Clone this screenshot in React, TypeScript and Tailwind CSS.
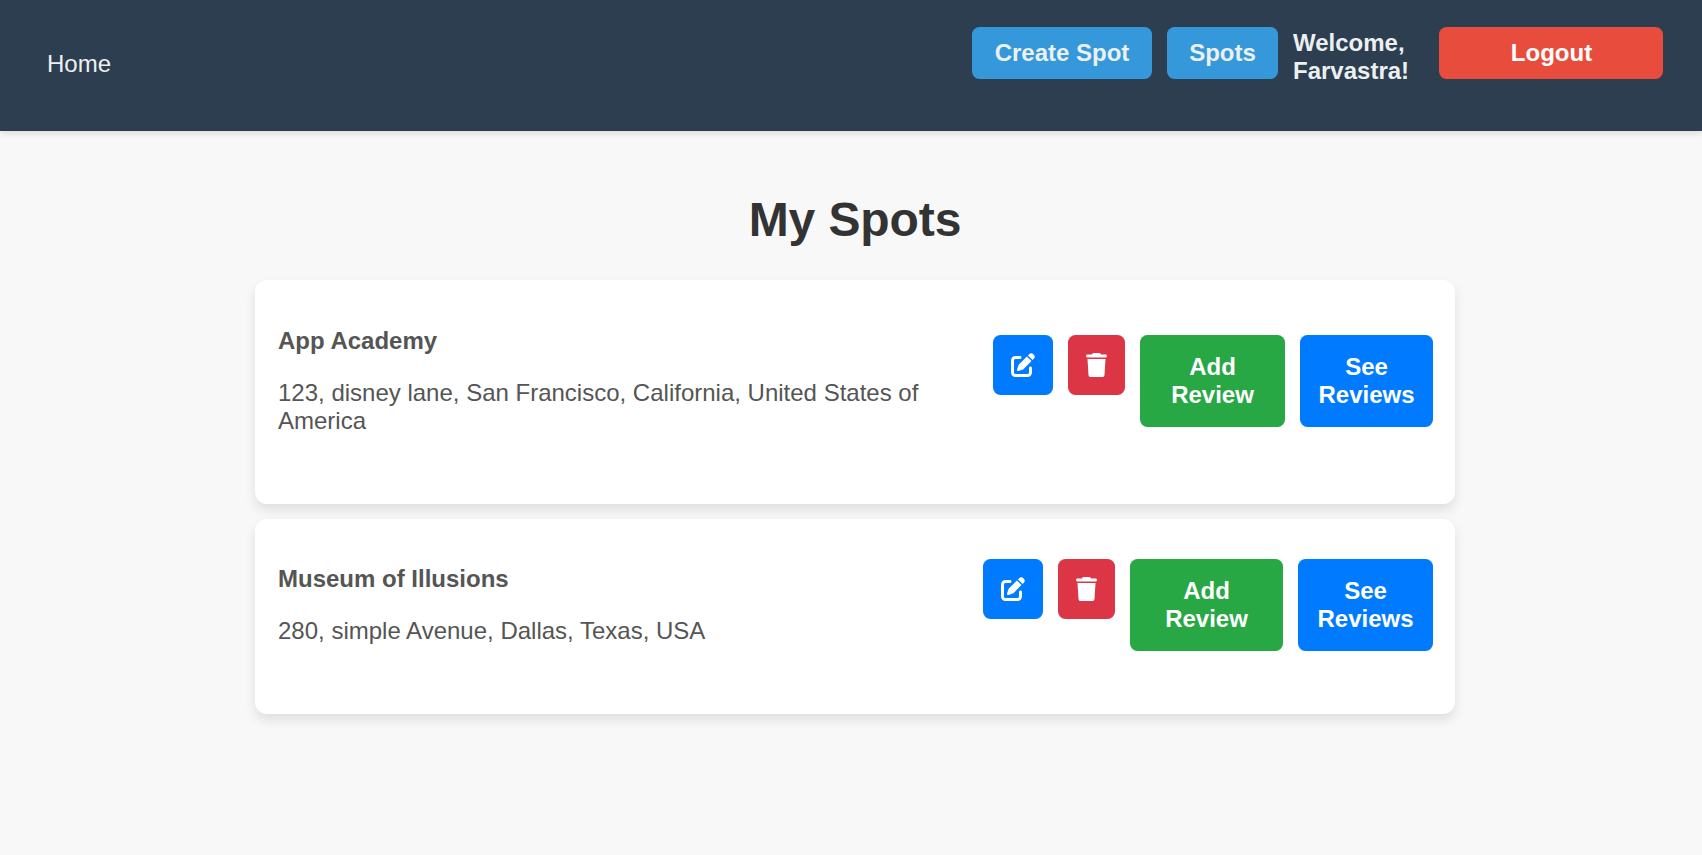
import { FaPenToSquare, FaTrash } from "react-icons/fa6";

type Spot = {
  name: string;
  address: string;
  card: string;
  info: string;
  actions: string;
  addWidth: string;
  seeWidth: string;
};

const spots: Spot[] = [
  {
    name: "App Academy",
    address: "123, disney lane, San Francisco, California, United States of America",
    card: "h-[224px]",
    info: "mt-[47px]",
    actions: "mt-[55px]",
    addWidth: "w-[145px]",
    seeWidth: "w-[133px]",
  },
  {
    name: "Museum of Illusions",
    address: "280, simple Avenue, Dallas, Texas, USA",
    card: "h-[195px]",
    info: "mt-[46px]",
    actions: "mt-10",
    addWidth: "w-[153px]",
    seeWidth: "w-[135px]",
  },
];

function Header() {
  return (
    <header className="flex h-[131px] items-start bg-[#2c3e50] pr-[39px] pl-[47px] text-[#ecf0f1] shadow-[0_3px_6px_rgba(0,0,0,0.1)]">
      <a className="mt-[50px]">Home</a>
      <nav className="mt-[27px] ml-auto flex items-start">
        <button className="h-[52px] w-[180px] rounded-[7.5px] bg-[#3498db] font-bold">Create Spot</button>
        <button className="ml-[15px] h-[52px] w-[111px] rounded-[7.5px] bg-[#3498db] font-bold">Spots</button>
        <span className="mt-[2px] ml-[15px] w-[146px] font-bold">
          Welcome,
          <br />
          Farvastra!
        </span>
        <button className="h-[52px] w-[224px] rounded-[7.5px] bg-[#e74c3c] pl-px font-bold text-white">Logout</button>
      </nav>
    </header>
  );
}

function SpotCard({ spot }: { spot: Spot }) {
  return (
    <li
      className={`flex items-start justify-between rounded-xl bg-white pr-[22px] pl-[23px] text-[#555] shadow-[0_6px_12px_rgba(0,0,0,0.1)] ${spot.card}`}
    >
      <div className={`w-[670px] ${spot.info}`}>
        <h2 className="mb-6 font-bold">{spot.name}</h2>
        <p>{spot.address}</p>
      </div>
      <div className={`flex items-start gap-[15px] font-bold text-white ${spot.actions}`}>
        <button aria-label="Edit" className="rounded-[7.5px] bg-[#007bff] p-[18px]">
          <FaPenToSquare className="block size-6" />
        </button>
        <button aria-label="Delete" className="rounded-[7.5px] bg-[#dc3545] p-[18px]">
          <FaTrash className="block h-6 w-[21px]" />
        </button>
        <button className={`rounded-[7.5px] bg-[#28a745] py-[18px] ${spot.addWidth}`}>
          Add
          <br />
          Review
        </button>
        <button className={`rounded-[7.5px] bg-[#007bff] py-[18px] ${spot.seeWidth}`}>
          See
          <br />
          Reviews
        </button>
      </div>
    </li>
  );
}

export default function App() {
  return (
    <div className="min-h-screen bg-[#f8f8f8] font-['Liberation_Sans',Arial,sans-serif] text-2xl leading-7">
      <Header />
      <main className="ml-[255px] flex w-[1200px] flex-col pt-[61px]">
        <h1 className="mb-8 text-center text-5xl leading-14 font-bold tracking-[-0.1px] text-[#333]">My Spots</h1>
        <ul className="flex flex-col gap-[15px]">
          {spots.map((spot) => (
            <SpotCard key={spot.name} spot={spot} />
          ))}
        </ul>
      </main>
    </div>
  );
}
